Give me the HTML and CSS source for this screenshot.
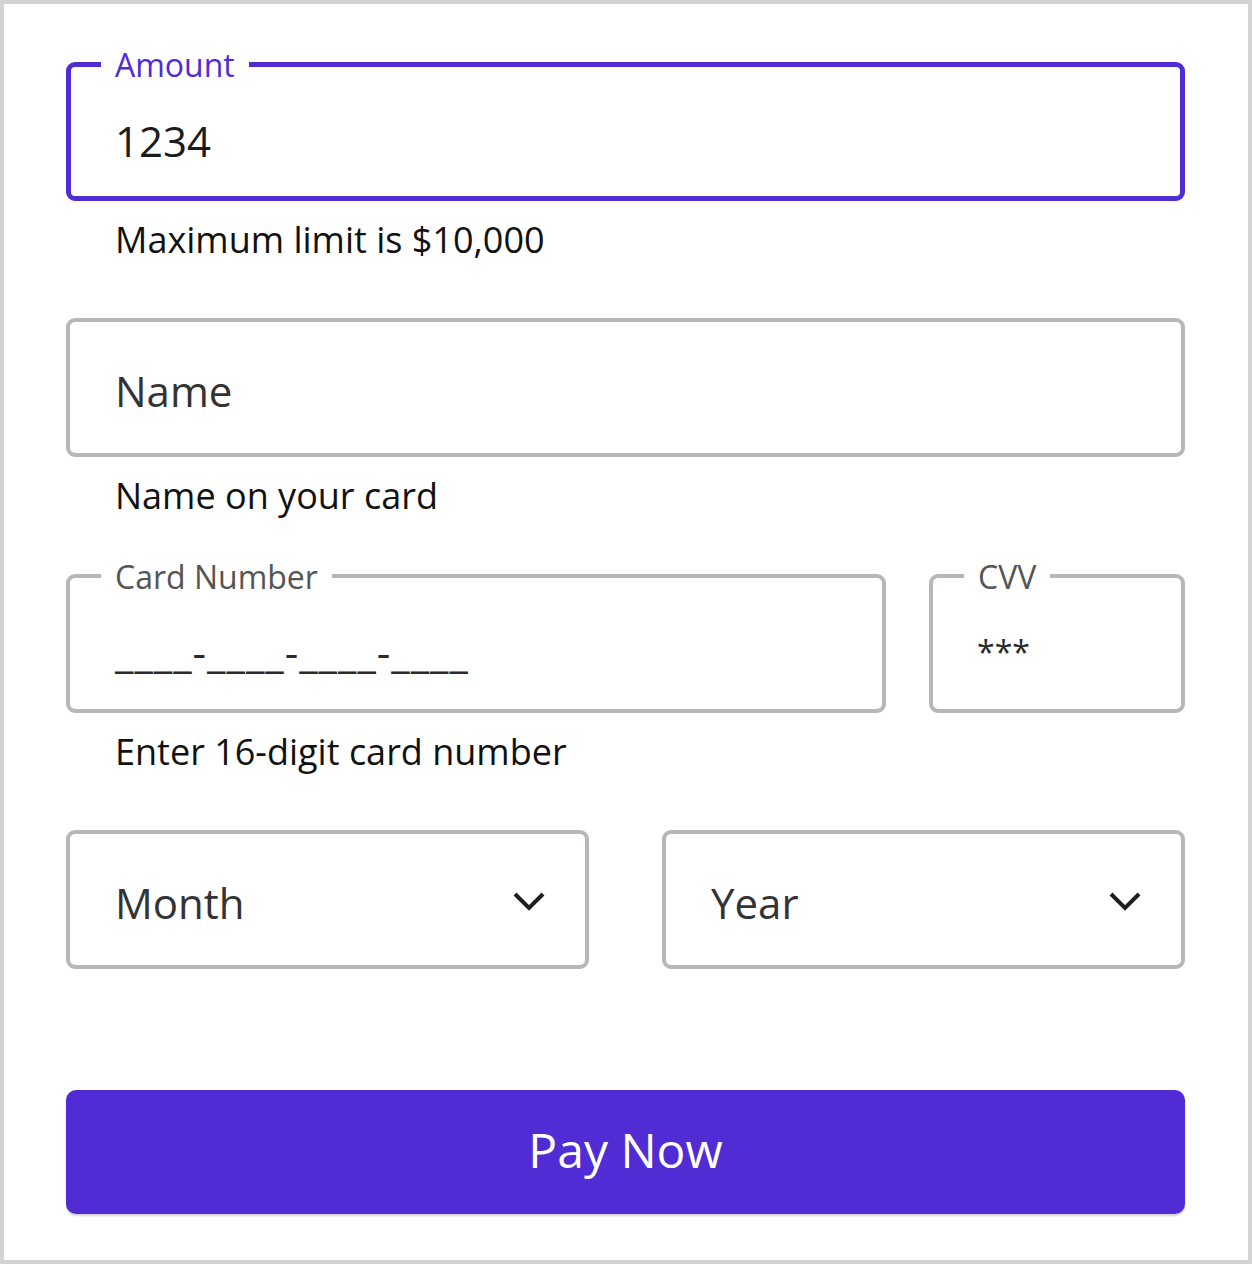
FILE: index.html
```html
<!DOCTYPE html>
<html lang="en">
<head>
<meta charset="utf-8">
<title>Payment</title>
<link rel="stylesheet" href="styles.css">
</head>
<body>
<div class="frame">
  <form class="form">
    <div class="group">
      <div class="field labeled focused">
        <span class="label">Amount</span>
        <span class="value">1234</span>
      </div>
      <div class="helper">Maximum limit is $10,000</div>
    </div>

    <div class="group">
      <div class="field">
        <span class="placeholder">Name</span>
      </div>
      <div class="helper">Name on your card</div>
    </div>

    <div class="group">
      <div class="card-row">
        <div class="field labeled">
          <span class="label">Card Number</span>
          <span class="placeholder mask">____-____-____-____</span>
        </div>
        <div class="field labeled cvv">
          <span class="label">CVV</span>
          <span class="placeholder stars">***</span>
        </div>
      </div>
      <div class="helper">Enter 16-digit card number</div>
    </div>

    <div class="date-row">
      <div class="field select">
        <span class="placeholder">Month</span>
        <svg class="chevron" width="34" height="22" viewBox="0 0 34 22"><path d="M3 4 L17 18 L31 4" fill="none" stroke="#1e1e1e" stroke-width="4"/></svg>
      </div>
      <div class="field select">
        <span class="placeholder">Year</span>
        <svg class="chevron" width="34" height="22" viewBox="0 0 34 22"><path d="M3 4 L17 18 L31 4" fill="none" stroke="#1e1e1e" stroke-width="4"/></svg>
      </div>
    </div>

    <button type="button" class="pay">Pay Now</button>
  </form>
</div>
</body>
</html>
```

FILE: styles.css
```css
* { box-sizing: border-box; }

html, body {
  margin: 0;
  padding: 0;
  background: #ffffff;
}

body {
  font-family: "Open Sans", "Noto Sans", sans-serif;
  color: #111111;
}

.frame {
  height: 1264px;
  border: 4px solid #d3d3d3;
  background: #ffffff;
}

.form {
  display: flex;
  flex-direction: column;
  padding: 58px 63px 0 62px;
}

.group {
  display: flex;
  flex-direction: column;
  margin-bottom: 54px;
}

.field {
  position: relative;
  height: 139px;
  border: 4px solid #b8b6bc;
  border-radius: 9px;
  padding: 44px 0 0 45px;
  background: #ffffff;
}

.field.labeled {
  padding-top: 49px;
}

.field.focused {
  border: 5px solid #512bd4;
  padding-left: 44px;
}

.label {
  position: absolute;
  top: -17px;
  left: 31px;
  padding: 0 14px;
  background: #ffffff;
  font-size: 32px;
  line-height: 32px;
  color: #555555;
  white-space: nowrap;
}

.focused .label {
  top: -18px;
  left: 30px;
  color: #512bd4;
}

.value,
.placeholder {
  display: block;
  font-size: 42px;
  line-height: 50px;
  white-space: nowrap;
}

.value { color: #1b1b1b; }

.placeholder { color: #333333; }

.mask {
  color: #2a2a2a;
  letter-spacing: 1px;
}

.stars {
  font-size: 32px;
  color: #2a2a2a;
}

.helper {
  margin-top: 15px;
  padding-left: 49px;
  font-size: 36px;
  line-height: 48px;
  color: #111111;
  white-space: nowrap;
}

.card-row {
  display: grid;
  grid-template-columns: 1fr 256px;
  column-gap: 43px;
}

.cvv {
  padding-left: 44px;
}

.date-row {
  display: grid;
  grid-template-columns: 1fr 1fr;
  column-gap: 73px;
}

.field.select {
  display: flex;
  align-items: center;
  justify-content: space-between;
  padding: 0 39px 0 45px;
}

.select .placeholder {
  margin-top: 6px;
}

.chevron {
  display: block;
  margin-top: 3px;
}

.pay {
  margin-top: 121px;
  height: 124px;
  width: 100%;
  border: none;
  border-radius: 10px;
  background: #512bd4;
  color: #ffffff;
  font-family: "Open Sans", "Noto Sans", sans-serif;
  font-size: 48px;
  padding: 0 0 6px 0;
  box-shadow: 0 2px 2px rgba(0, 0, 0, 0.18);
  cursor: pointer;
}
```
